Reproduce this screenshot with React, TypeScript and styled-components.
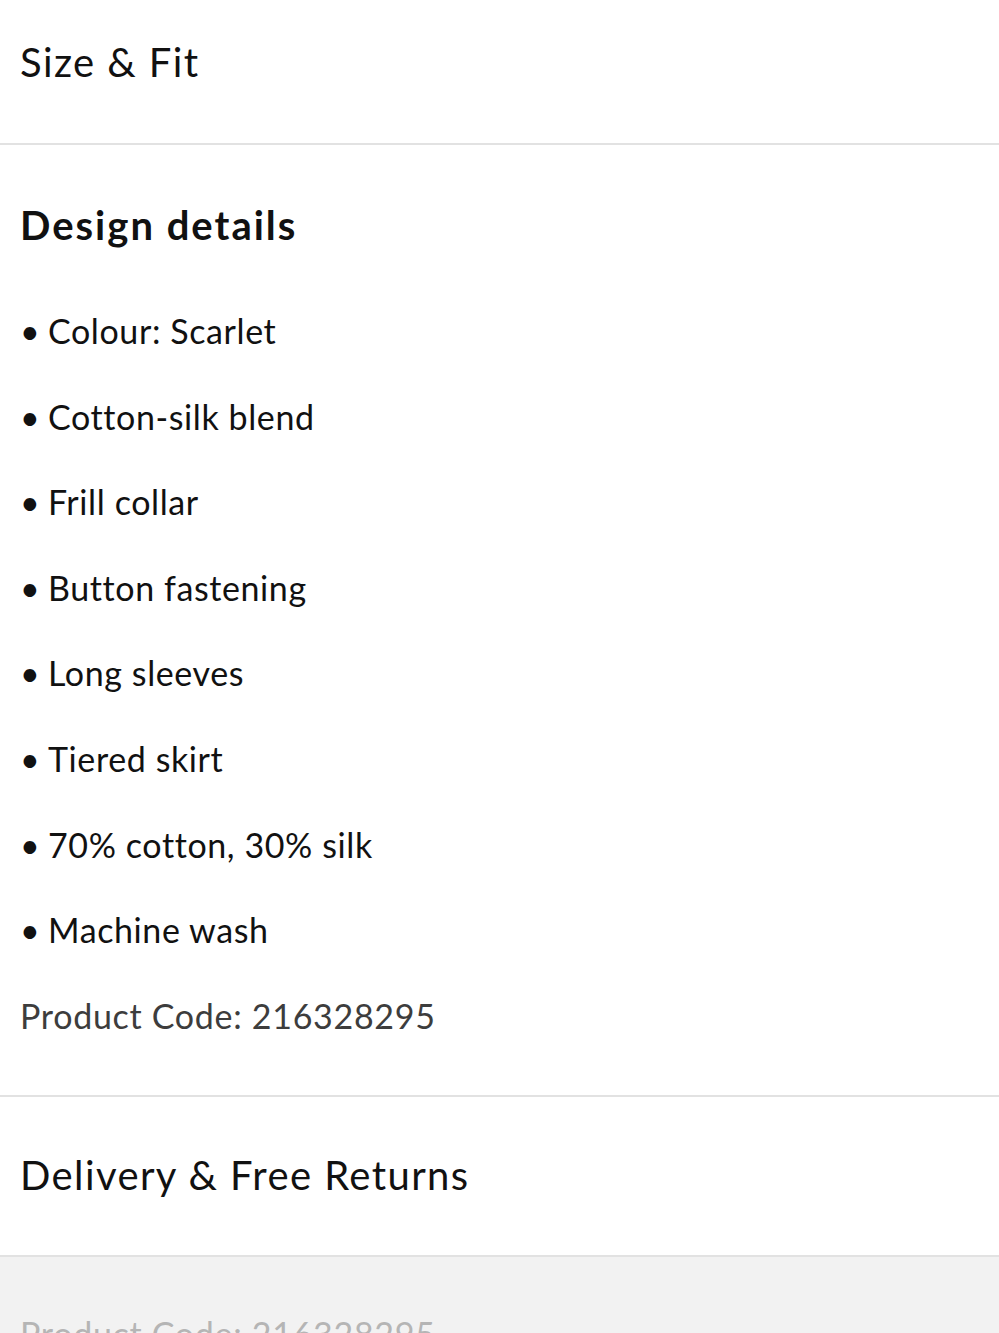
import styled, { createGlobalStyle } from "styled-components";

const details = [
  "Colour: Scarlet",
  "Cotton-silk blend",
  "Frill collar",
  "Button fastening",
  "Long sleeves",
  "Tiered skirt",
  "70% cotton, 30% silk",
  "Machine wash",
];

const productCode = "216328295";

export default function App() {
  return (
    <>
      <GlobalStyle />
      <Page>
        <AccordionRow top={37} height={145}>
          <RowTitle>Size &amp; Fit</RowTitle>
        </AccordionRow>
        <DetailsPanel>
          <PanelTitle>Design details</PanelTitle>
          <DetailList>
            {details.map((item) => (
              <DetailItem key={item}>
                <Bullet>•</Bullet>
                {item}
              </DetailItem>
            ))}
          </DetailList>
          <CodeText>Product Code: {productCode}</CodeText>
        </DetailsPanel>
        <AccordionRow top={53} height={160}>
          <RowTitle>Delivery &amp; Free Returns</RowTitle>
        </AccordionRow>
        <Footer>
          <FooterCode>Product Code: {productCode}</FooterCode>
        </Footer>
      </Page>
    </>
  );
}

const GlobalStyle = createGlobalStyle`
  html, body {
    margin: 0;
    padding: 0;
    background: #ffffff;
  }
  body {
    font-family: "Lato", "Noto Sans", sans-serif;
    color: #111111;
  }
`;

const Page = styled.div`
  width: 999px;
  height: 1333px;
  overflow: hidden;
  display: flex;
  flex-direction: column;
`;

const AccordionRow = styled.div<{ top: number; height: number }>`
  box-sizing: border-box;
  height: ${({ height }) => height}px;
  padding: ${({ top }) => top}px 20px 0;
  border-bottom: 2px solid #e2e2e2;
  flex-shrink: 0;
`;

const RowTitle = styled.h2`
  margin: 0;
  font-size: 40px;
  line-height: 50px;
  font-weight: 400;
  letter-spacing: 1.4px;
  color: #111111;
`;

const DetailsPanel = styled.section`
  box-sizing: border-box;
  padding: 58px 20px 57px;
  border-bottom: 2px solid #e2e2e2;
  display: flex;
  flex-direction: column;
  flex-shrink: 0;
`;

const PanelTitle = styled.h3`
  margin: 0 0 62px;
  font-size: 40px;
  line-height: 44px;
  font-weight: 700;
  letter-spacing: 2px;
  color: #111111;
`;

const DetailList = styled.ul`
  list-style: none;
  margin: 0;
  padding: 0;
  display: flex;
  flex-direction: column;
  gap: 41.6px;
`;

const DetailItem = styled.li`
  font-size: 34px;
  line-height: 44px;
  letter-spacing: 0.6px;
  color: #111111;
  display: flex;
  align-items: center;
`;

const Bullet = styled.span`
  width: 28px;
  flex-shrink: 0;
  font-size: 34px;
`;

const CodeText = styled.p`
  margin: 41.6px 0 0;
  font-size: 34px;
  line-height: 44px;
  letter-spacing: 0.7px;
  color: #3d3d3d;
`;

const Footer = styled.div`
  flex: 1;
  background: #f2f2f2;
  padding: 55px 20px 0;
`;

const FooterCode = styled.p`
  margin: 0;
  font-size: 34px;
  line-height: 44px;
  letter-spacing: 0.7px;
  color: #b5b5b5;
`;
